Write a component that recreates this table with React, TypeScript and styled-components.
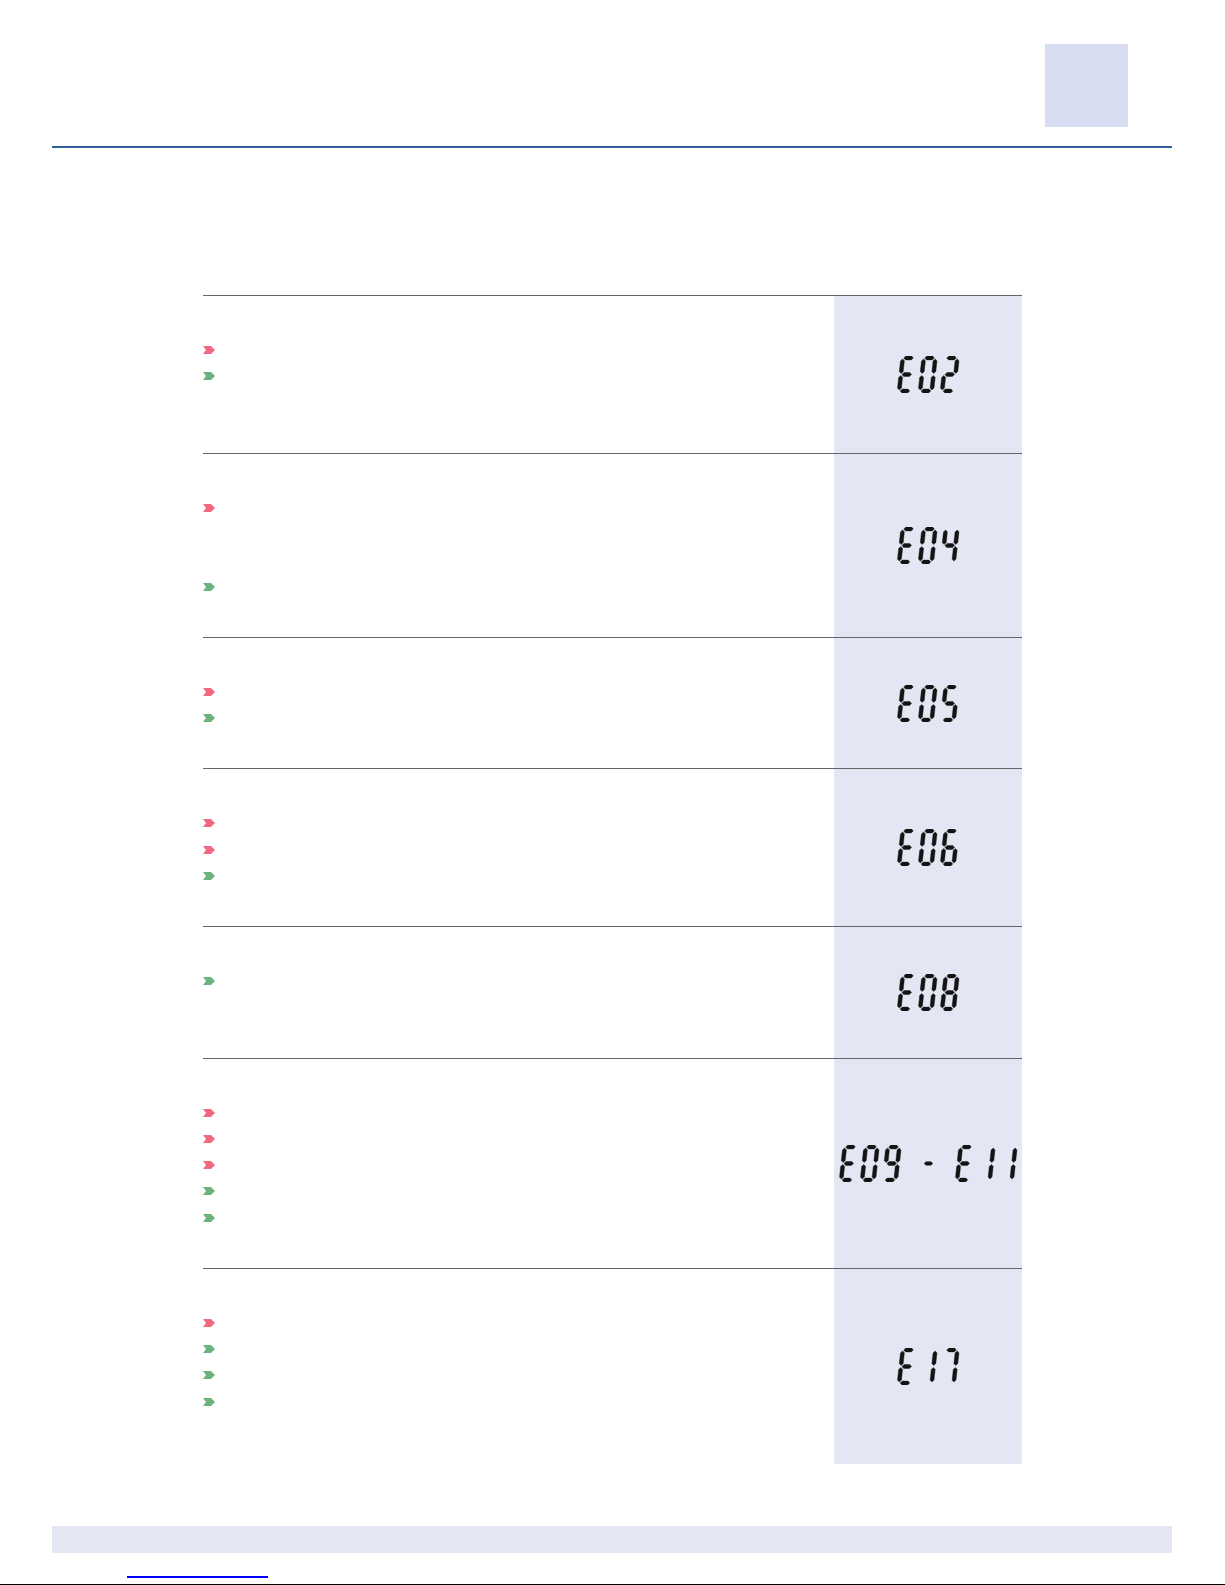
import React from 'react'
import styled, { createGlobalStyle } from 'styled-components'

const GlobalStyle = createGlobalStyle`
	html, body {
		margin: 0;
		padding: 0;
		background: #fff;
	}
	body {
		font-family: 'Liberation Sans', Arial, sans-serif;
	}
`

type Tone = 'cause' | 'fix'

type Item = { tone: Tone; lines: number }

type ErrorRow = { code: string; items: Item[]; minHeight?: number }

const rows: ErrorRow[] = [
	{ code: 'E02', items: [{ tone: 'cause', lines: 1 }, { tone: 'fix', lines: 2 }] },
	{ code: 'E04', items: [{ tone: 'cause', lines: 3 }, { tone: 'fix', lines: 1 }] },
	{ code: 'E05', items: [{ tone: 'cause', lines: 1 }, { tone: 'fix', lines: 1 }] },
	{
		code: 'E06',
		items: [
			{ tone: 'cause', lines: 1 },
			{ tone: 'cause', lines: 1 },
			{ tone: 'fix', lines: 1 },
		],
	},
	{ code: 'E08', items: [{ tone: 'fix', lines: 2 }] },
	{
		code: 'E09 - E11',
		items: [
			{ tone: 'cause', lines: 1 },
			{ tone: 'cause', lines: 1 },
			{ tone: 'cause', lines: 1 },
			{ tone: 'fix', lines: 1 },
			{ tone: 'fix', lines: 1 },
		],
	},
	{
		code: 'E17',
		minHeight: 196,
		items: [
			{ tone: 'cause', lines: 1 },
			{ tone: 'fix', lines: 1 },
			{ tone: 'fix', lines: 1 },
			{ tone: 'fix', lines: 1 },
		],
	},
]

const LINE = 26.25

const Page = styled.div`
	width: 1225px;
	height: 1585px;
	box-sizing: border-box;
	border-bottom: 1px solid #000;
	display: flex;
	flex-direction: column;
`

const Header = styled.header`
	display: flex;
	justify-content: flex-end;
	padding: 44px 97px 0 0;
`

const ChapterTab = styled.div`
	width: 83px;
	height: 83px;
	background: #d8dcf0;
`

const HeaderRule = styled.div`
	margin: 19px 53px 0 52px;
	height: 2px;
	background: #2f6096;
`

const Table = styled.section`
	margin: 147px 0 0 203px;
	width: 819px;
	display: flex;
	flex-direction: column;
`

const Row = styled.div<{ $minHeight?: number }>`
	display: grid;
	grid-template-columns: 631px 188px;
	border-top: 1px solid #666;
	min-height: ${p => (p.$minHeight ? `${p.$minHeight}px` : 'auto')};
	box-sizing: border-box;
`

const Notes = styled.ul`
	list-style: none;
	margin: 0;
	padding: 41px 0 37px 0;
`

const Note = styled.li<{ $lines: number }>`
	height: ${p => p.$lines * LINE}px;
	display: flex;
	align-items: flex-start;
`

const Marker = styled.span`
	display: flex;
	align-items: center;
	height: ${LINE}px;
`

const CodePanel = styled.div`
	background: #e4e6f4;
	display: flex;
	align-items: center;
	justify-content: center;
`

const Lcd = styled.div`
	display: flex;
	align-items: center;
	gap: 1.5px;
	color: #141414;
`

const Dash = styled.svg`
	margin: 0 20px 0 21px;
`

const FooterBar = styled.div`
	margin: 62px 53px 0 52px;
	height: 27px;
	background: #e4e6f4;
`

const FooterLink = styled.a`
	display: block;
	margin: 23px 0 0 127px;
	width: 141px;
	height: 0;
	border-bottom: 2px solid #0000ff;
`

const Chevron = ({ tone }: { tone: Tone }) => (
	<svg width='12' height='8' viewBox='0 0 12 8'>
		<polygon
			points='0,0 8,0 12,4 8,8 0,8 3,4'
			fill={tone === 'cause' ? '#f16880' : '#6cb27d'}
		/>
	</svg>
)

// seven segment lcd
const SEGS: Record<string, string> = {
	E: 'adefg',
	'0': 'abcdef',
	'1': 'bc',
	'2': 'abdeg',
	'4': 'bcfg',
	'5': 'acdfg',
	'6': 'acdefg',
	'7': 'abc',
	'8': 'abcdefg',
	'9': 'abcdfg',
}

const W = 15.5
const H = 37
const T = 3.9
const G = 1
const SLANT = 4
const SKEW = (-Math.atan(SLANT / H) * 180) / Math.PI

const hSeg = (c: number, x1: number, x2: number) =>
	[
		[x1, c],
		[x1 + T / 2, c - T / 2],
		[x2 - T / 2, c - T / 2],
		[x2, c],
		[x2 - T / 2, c + T / 2],
		[x1 + T / 2, c + T / 2],
	]
		.map(p => p.join(','))
		.join(' ')

const vSeg = (c: number, y1: number, y2: number) =>
	[
		[c, y1],
		[c + T / 2, y1 + T / 2],
		[c + T / 2, y2 - T / 2],
		[c, y2],
		[c - T / 2, y2 - T / 2],
		[c - T / 2, y1 + T / 2],
	]
		.map(p => p.join(','))
		.join(' ')

const segPoints: Record<string, string> = {
	a: hSeg(T / 2, T / 2 + G, W - T / 2 - G),
	g: hSeg(H / 2, T / 2 + G, W - T / 2 - G),
	d: hSeg(H - T / 2, T / 2 + G, W - T / 2 - G),
	f: vSeg(T / 2, T / 2 + G, H / 2 - G),
	e: vSeg(T / 2, H / 2 + G, H - T / 2 - G),
	b: vSeg(W - T / 2, T / 2 + G, H / 2 - G),
	c: vSeg(W - T / 2, H / 2 + G, H - T / 2 - G),
}

const Digit = ({ ch }: { ch: string }) => (
	<svg width={W + SLANT + 0.5} height={H} viewBox={`0 0 ${W + SLANT + 0.5} ${H}`}>
		<g
			transform={`translate(${SLANT},0) skewX(${SKEW})`}
			fill='currentColor'
			stroke='currentColor'
			strokeWidth='0.4'
			strokeLinejoin='round'
		>
			{(SEGS[ch] || '').split('').map(s => (
				<polygon key={s} points={segPoints[s]} />
			))}
		</g>
	</svg>
)

const LcdCode = ({ code }: { code: string }) => (
	<Lcd role='img' aria-label={code}>
		{code
			.replace(/ /g, '')
			.split('')
			.map((ch, i) =>
				ch === '-' ? (
					<Dash key={i} width='9' height={H} viewBox={`0 0 9 ${H}`}>
						<polygon points={hSeg(H / 2, 0, 9)} fill='currentColor' />
					</Dash>
				) : (
					<Digit key={i} ch={ch} />
				),
			)}
	</Lcd>
)

export default function App() {
	return (
		<>
			<GlobalStyle />
			<Page>
				<Header>
					<ChapterTab />
				</Header>
				<HeaderRule />
				<Table>
					{rows.map(row => (
						<Row key={row.code} $minHeight={row.minHeight}>
							<Notes>
								{row.items.map((item, i) => (
									<Note key={i} $lines={item.lines}>
										<Marker>
											<Chevron tone={item.tone} />
										</Marker>
									</Note>
								))}
							</Notes>
							<CodePanel>
								<LcdCode code={row.code} />
							</CodePanel>
						</Row>
					))}
				</Table>
				<FooterBar />
				<FooterLink href='#' aria-label='link' />
			</Page>
		</>
	)
}
